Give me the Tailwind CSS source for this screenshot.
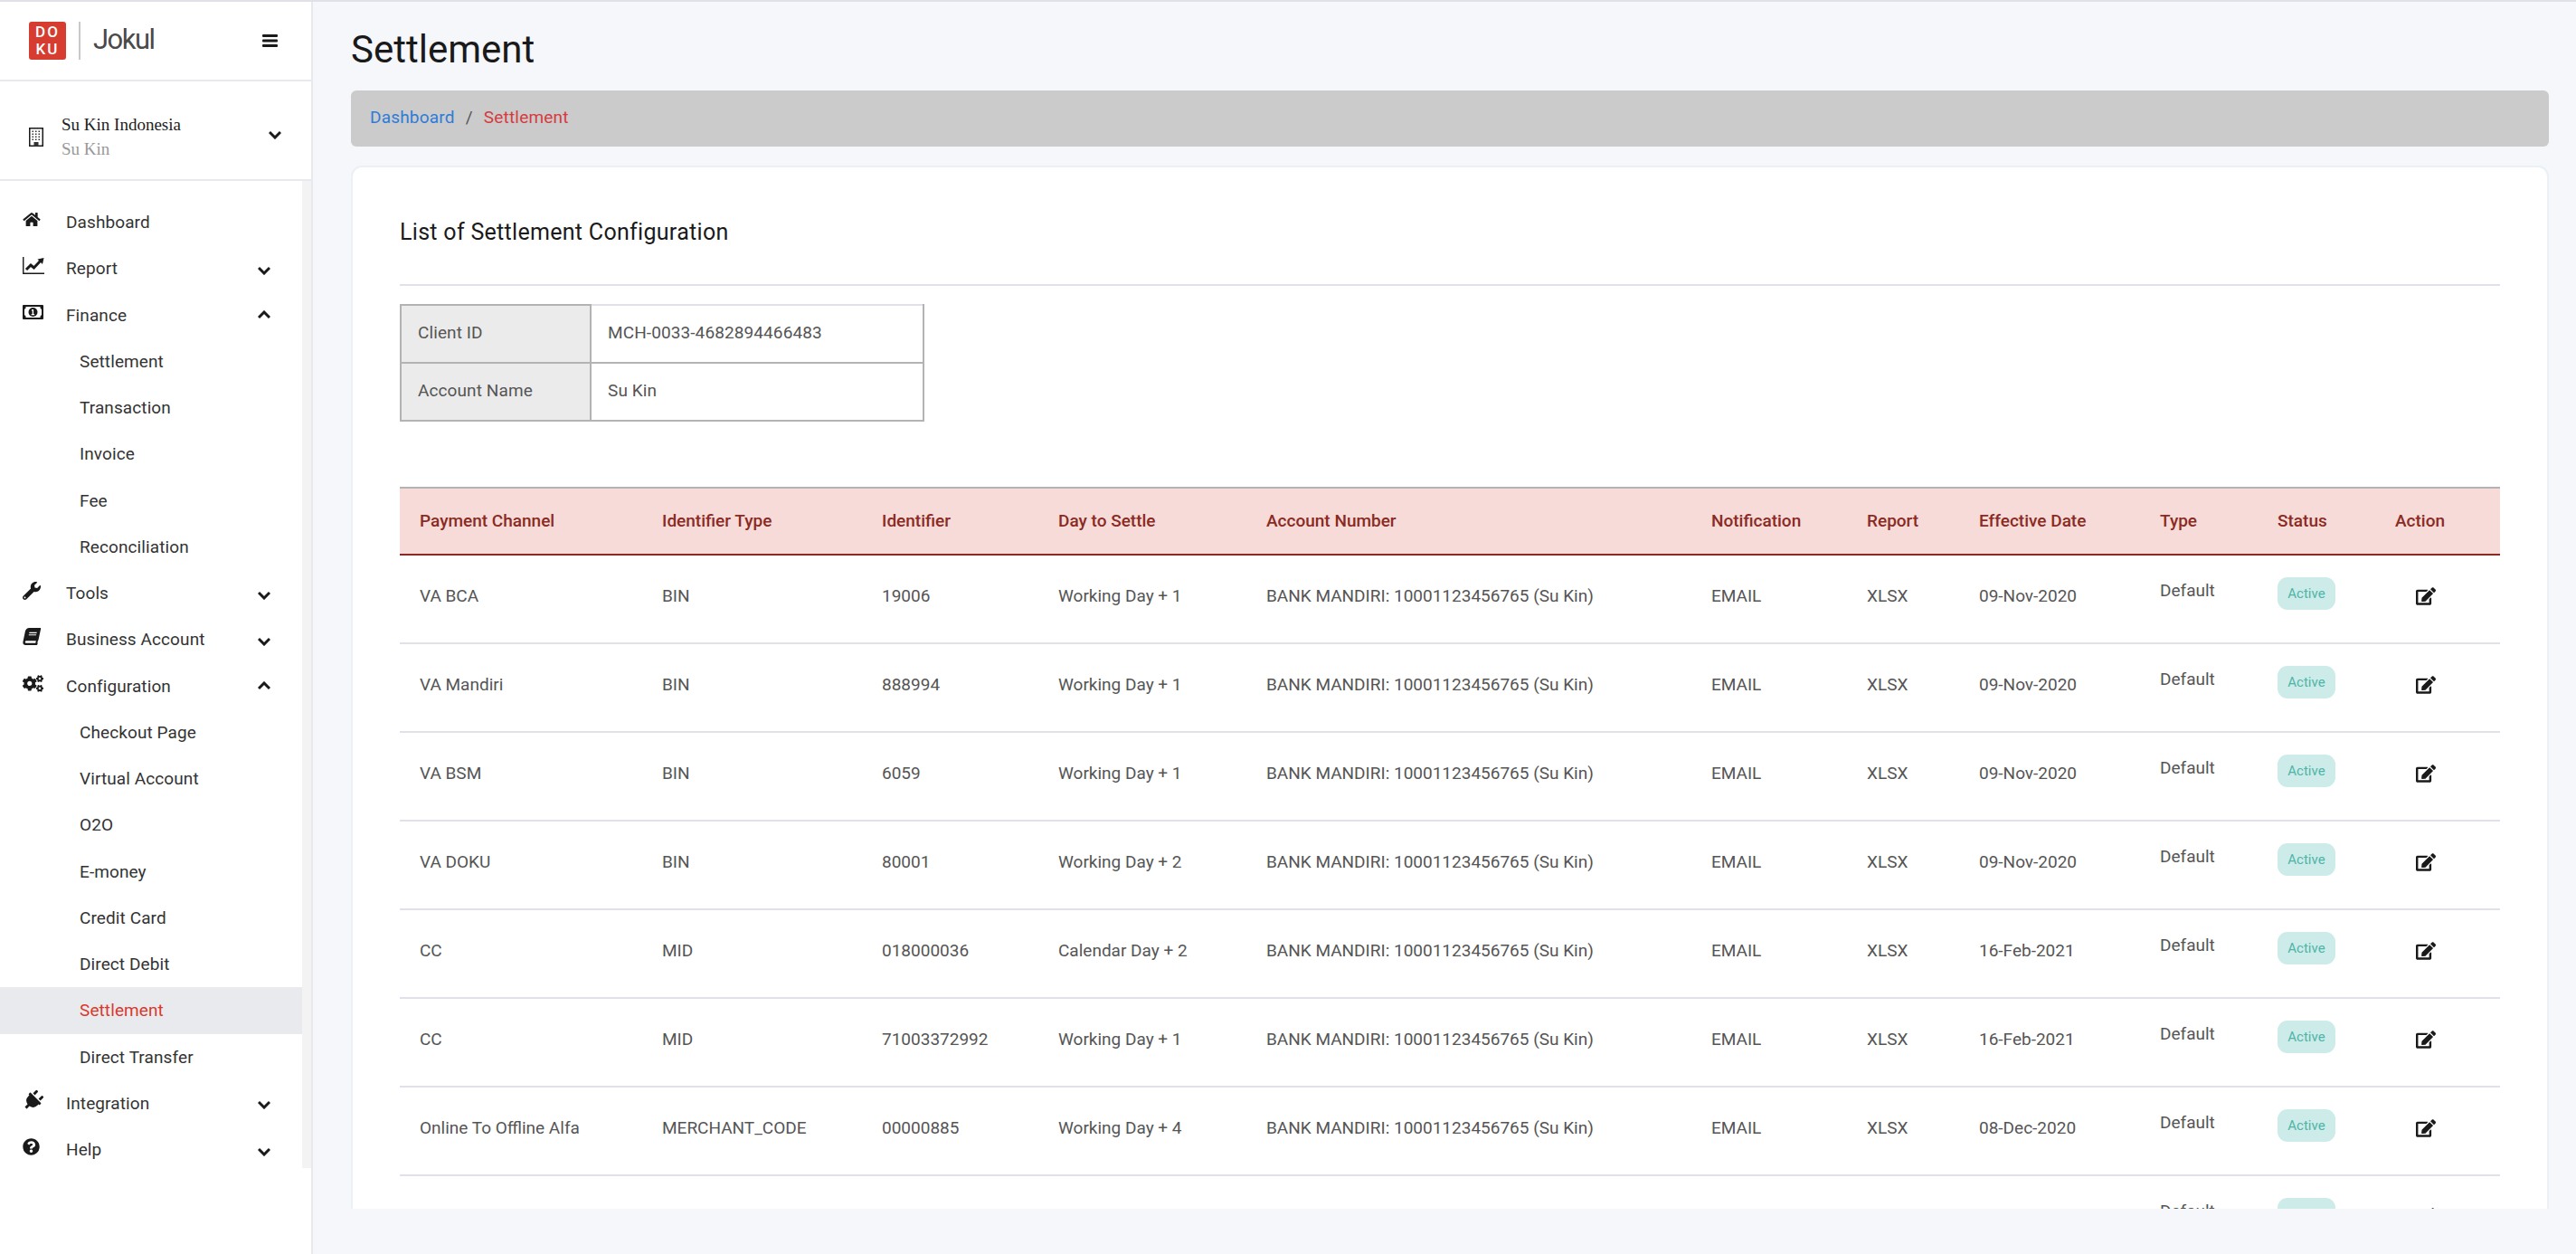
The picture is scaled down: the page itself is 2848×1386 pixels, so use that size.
<!DOCTYPE html>
<html lang="en">

<head>
  <meta charset="UTF-8" />
  <title>Settlement</title>
  <script src="https://cdn.jsdelivr.net/npm/@tailwindcss/browser@4"></script>
</head>

<body class="bg-[#f6f7fb] font-['Roboto',sans-serif] text-[#333333]">
  <div class="h-[1386px] overflow-hidden flex border-t-2 border-[#dfe0e8]">

    <!-- Sidebar -->
    <aside class="w-[346px] h-full flex-none bg-white border-r-2 border-[#e8e9ef] flex flex-col">
      <div class="h-[86px] flex-none flex items-center pl-[32px] pr-[37px]">
        <div class="w-[41px] h-[42px] rounded-[3px] bg-[#d63d30] text-white font-medium text-[17px] leading-[19px] tracking-[2px] flex flex-col items-center justify-center">
          <span>DO</span>
          <span>KU</span>
        </div>
        <div class="w-[2px] h-[42px] bg-[#c9c9c9] ml-[14px]"></div>
        <span class="ml-[14px] -mt-[3px] text-[31px] leading-none text-[#4a4a4a] tracking-[-1.5px]">Jokul</span>
        <svg class="ml-auto w-[17px] h-[14px]" viewBox="0 0 17 14" fill="#1a1a1a">
          <rect width="17" height="3" rx="1" />
          <rect y="5.5" width="17" height="3" rx="1" />
          <rect y="11" width="17" height="3" rx="1" />
        </svg>
      </div>

      <div class="h-[112px] flex-none border-y-2 border-[#e8e9ef] flex items-center pt-[14px] pl-[32px] pr-[33px]">
        <svg class="w-[16px] h-[21px] flex-none" viewBox="0 0 16 21">
          <rect x="0.75" y="0.75" width="14.5" height="19.5" fill="#fff" stroke="#1a1a1a" stroke-width="1.5" />
          <path d="M3.5 3.5h1.5v1.5h-1.5zM7 3.5h1.5v1.5h-1.5zM10.5 3.5h1.5v1.5h-1.5zM3.5 6.5h1.5v1.5h-1.5zM7 6.5h1.5v1.5h-1.5zM10.5 6.5h1.5v1.5h-1.5zM3.5 9.5h1.5v1.5h-1.5zM7 9.5h1.5v1.5h-1.5zM10.5 9.5h1.5v1.5h-1.5zM3.5 12.5h1.5v1.5h-1.5zM7 12.5h1.5v1.5h-1.5zM10.5 12.5h1.5v1.5h-1.5zM5.5 16h5v4.5h-5z" fill="#333" />
        </svg>
        <div class="ml-[20px] font-['Liberation_Serif',serif] text-[19px]">
          <div class="leading-[27px] text-[#222222]">Su Kin Indonesia</div>
          <div class="leading-[27px] text-[#999999]">Su Kin</div>
        </div>
        <svg class="ml-auto w-[14px] h-[10px] -mt-[4px]" viewBox="0 0 14 10" fill="none" stroke="#1a1a1a" stroke-width="3">
          <path d="M1 2l6 6 6-6" />
        </svg>
      </div>

      <nav class="h-[1091px] flex-none overflow-hidden border-r-[10px] border-[#f3f3f4] pt-[20px] text-[19px] tracking-[0.1px] leading-[51.25px]">
        <!-- Dashboard -->
        <a class="h-[51.25px] flex items-center pl-[25px] pr-[35px]">
          <svg class="w-[20px] h-[17px] -mt-[7px] flex-none" viewBox="0 0 576 512" fill="#1a1a1a"><path d="M280.37 148.26L96 300.11V464a16 16 0 0 0 16 16l112.06-.29a16 16 0 0 0 15.92-16V368a16 16 0 0 1 16-16h64a16 16 0 0 1 16 16v95.64a16 16 0 0 0 16 16.05L464 480a16 16 0 0 0 16-16V300L295.67 148.26a12.19 12.19 0 0 0-15.3 0zM571.6 251.47L488 182.56V44.05a12 12 0 0 0-12-12h-56a12 12 0 0 0-12 12v72.61L318.47 43a48 48 0 0 0-61 0L4.34 251.47a12 12 0 0 0-1.6 16.9l25.5 31A12 12 0 0 0 45.15 301l235.22-193.74a12.19 12.19 0 0 1 15.3 0L530.9 301a12 12 0 0 0 16.9-1.6l25.5-31a12 12 0 0 0-1.7-16.93z" /></svg>
          <span class="ml-[28px]">Dashboard</span>
        </a>
        <!-- Report -->
        <a class="h-[51.25px] flex items-center pl-[25px] pr-[35px]">
          <svg class="w-[24px] h-[19px] -mt-[6px] flex-none" viewBox="0 0 24 19" fill="none" stroke="#1a1a1a">
            <path d="M0.75 0v18.25H24" stroke-width="1.4" />
            <path d="M4 14l5-5 3.5 3 7-7.5" stroke-width="3" />
            <path d="M16.5 2.5L23.5 1l-1.5 7z" fill="#1a1a1a" stroke="none" />
          </svg>
          <span class="ml-[24px]">Report</span>
          <svg class="ml-auto w-[14px] h-[10px] mt-[4px]" viewBox="0 0 14 10" fill="none" stroke="#1a1a1a" stroke-width="3"><path d="M1 2l6 6 6-6" /></svg>
        </a>
        <!-- Finance -->
        <a class="h-[51.25px] flex items-center pl-[25px] pr-[35px]">
          <svg class="w-[23px] h-[16px] -mt-[6px] flex-none" viewBox="0 0 23 16">
            <rect width="23" height="16" rx="1" fill="#1a1a1a" />
            <path d="M3.5 2h16v1.5l1.5 1.5v6l-1.5 1.5v1.5h-16v-1.5L2 11V5l1.5-1.5z" fill="#fff" />
            <circle cx="11.5" cy="8" r="5" fill="#1a1a1a" />
            <path d="M10.2 5h1.9v5h1v1.2h-3.4V10h1V6.6h-.9z" fill="#fff" />
          </svg>
          <span class="ml-[25px]">Finance</span>
          <svg class="ml-auto w-[14px] h-[10px]" viewBox="0 0 14 10" fill="none" stroke="#1a1a1a" stroke-width="3"><path d="M1 8l6-6 6 6" /></svg>
        </a>
        <a class="h-[51.25px] flex items-center pl-[88px]">Settlement</a>
        <a class="h-[51.25px] flex items-center pl-[88px]">Transaction</a>
        <a class="h-[51.25px] flex items-center pl-[88px]">Invoice</a>
        <a class="h-[51.25px] flex items-center pl-[88px]">Fee</a>
        <a class="h-[51.25px] flex items-center pl-[88px]">Reconciliation</a>
        <!-- Tools -->
        <a class="h-[51.25px] flex items-center pl-[25px] pr-[35px]">
          <svg class="w-[20px] h-[20px] -mt-[6px] flex-none" viewBox="0 0 512 512" fill="#1a1a1a"><path d="M507.73 109.1c-2.24-9.03-13.54-12.09-20.12-5.51l-74.36 74.36-67.88-11.31-11.31-67.88 74.36-74.36c6.62-6.62 3.43-17.9-5.66-20.16-47.38-11.74-99.55.91-136.58 37.93-39.64 39.64-50.55 97.1-34.05 147.2L18.74 402.76c-24.99 24.99-24.99 65.51 0 90.5 24.99 24.99 65.51 24.99 90.5 0l213.21-213.21c50.12 16.71 107.47 5.68 147.37-34.22 37.07-37.07 49.7-89.32 37.91-136.73zM64 472c-13.25 0-24-10.75-24-24 0-13.26 10.75-24 24-24s24 10.74 24 24c0 13.25-10.75 24-24 24z" /></svg>
          <span class="ml-[28px]">Tools</span>
          <svg class="ml-auto w-[14px] h-[10px] mt-[4px]" viewBox="0 0 14 10" fill="none" stroke="#1a1a1a" stroke-width="3"><path d="M1 2l6 6 6-6" /></svg>
        </a>
        <!-- Business Account -->
        <a class="h-[51.25px] flex items-center pl-[25px] pr-[35px]">
          <svg class="w-[20px] h-[19px] -mt-[6px] flex-none -skew-x-12" viewBox="0 0 448 512" fill="#1a1a1a"><path d="M448 360V24c0-13.3-10.7-24-24-24H96C43 0 0 43 0 96v320c0 53 43 96 96 96h328c13.3 0 24-10.7 24-24v-16c0-7.5-3.5-14.3-8.9-18.7-4.2-15.4-4.2-59.3 0-74.7 5.4-4.3 8.9-11.1 8.9-18.6zM128 134c0-3.3 2.7-6 6-6h212c3.3 0 6 2.7 6 6v20c0 3.3-2.7 6-6 6H134c-3.3 0-6-2.7-6-6v-20zm0 64c0-3.3 2.7-6 6-6h212c3.3 0 6 2.7 6 6v20c0 3.3-2.7 6-6 6H134c-3.3 0-6-2.7-6-6v-20zm253.4 250H96c-17.7 0-32-14.3-32-32 0-17.6 14.4-32 32-32h285.4c-1.9 17.1-1.9 46.9 0 64z" /></svg>
          <span class="ml-[28px]">Business Account</span>
          <svg class="ml-auto w-[14px] h-[10px] mt-[4px]" viewBox="0 0 14 10" fill="none" stroke="#1a1a1a" stroke-width="3"><path d="M1 2l6 6 6-6" /></svg>
        </a>
        <!-- Configuration -->
        <a class="h-[51.25px] flex items-center pl-[25px] pr-[35px]">
          <svg class="w-[23px] h-[19px] -mt-[6px] flex-none" viewBox="0 0 640 512" fill="#1a1a1a"><path d="M512.1 191l-8.2 14.3c-3 5.3-9.4 7.5-15.1 5.4-11.8-4.4-22.6-10.7-32.1-18.6-4.6-3.8-5.8-10.5-2.8-15.7l8.2-14.3c-6.9-8-12.3-17.3-15.9-27.4h-16.5c-6 0-11.2-4.3-12.2-10.3-2-12-2.1-24.6 0-37.1 1-6 6.2-10.4 12.2-10.4h16.5c3.6-10.1 9-19.4 15.9-27.4l-8.2-14.3c-3-5.2-1.9-11.9 2.8-15.7 9.5-7.9 20.4-14.2 32.1-18.6 5.7-2.1 12.1.1 15.1 5.4l8.2 14.3c10.5-1.9 21.2-1.9 31.7 0L552 6.3c3-5.3 9.4-7.5 15.1-5.4 11.8 4.4 22.6 10.7 32.1 18.6 4.6 3.8 5.8 10.5 2.8 15.7l-8.2 14.3c6.9 8 12.3 17.3 15.9 27.4h16.5c6 0 11.2 4.3 12.2 10.3 2 12 2.1 24.6 0 37.1-1 6-6.2 10.4-12.2 10.4h-16.5c-3.6 10.1-9 19.4-15.9 27.4l8.2 14.3c3 5.2 1.9 11.9-2.8 15.7-9.5 7.9-20.4 14.2-32.1 18.6-5.7 2.1-12.1-.1-15.1-5.4l-8.2-14.3c-10.4 1.9-21.2 1.9-31.7 0zm-10.5-58.8c38.5 29.6 82.4-14.3 52.8-52.8-38.5-29.7-82.4 14.3-52.8 52.8zM386.3 286.1l33.7 16.8c10.1 5.8 14.5 18.1 10.5 29.1-8.9 24.2-26.4 46.4-42.6 65.8-7.4 8.9-20.2 11.1-30.3 5.3l-29.1-16.8c-16 13.7-34.6 24.6-54.9 31.7v33.6c0 11.6-8.3 21.6-19.7 23.6-24.6 4.2-50.4 4.4-75.9 0-11.5-2-20-11.9-20-23.6V418c-20.3-7.2-38.9-18-54.9-31.7L74 403c-10 5.8-22.9 3.6-30.3-5.3-16.2-19.4-33.3-41.6-42.2-65.7-4-10.9.4-23.2 10.5-29.1l33.3-16.8c-3.9-20.9-3.9-42.4 0-63.4L12 205.8c-10.1-5.8-14.6-18.1-10.5-29 8.9-24.2 26-46.4 42.2-65.8 7.4-8.9 20.2-11.1 30.3-5.3l29.1 16.8c16-13.7 34.6-24.6 54.9-31.7V57.1c0-11.5 8.2-21.5 19.6-23.5 24.6-4.2 50.5-4.4 76-.1 11.5 2 20 11.9 20 23.6v33.6c20.3 7.2 38.9 18 54.9 31.7l29.1-16.8c10-5.8 22.9-3.6 30.3 5.3 16.2 19.4 33.2 41.6 42.1 65.8 4 10.9.1 23.2-10 29.1l-33.7 16.8c3.9 21 3.9 42.5 0 63.5zm-117.6 21.1c59.2-77-28.7-164.9-105.7-105.7-59.2 77 28.7 164.9 105.7 105.7zm243.4 182.7l-8.2 14.3c-3 5.3-9.4 7.5-15.1 5.4-11.8-4.4-22.6-10.7-32.1-18.6-4.6-3.8-5.8-10.5-2.8-15.7l8.2-14.3c-6.9-8-12.3-17.3-15.9-27.4h-16.5c-6 0-11.2-4.3-12.2-10.3-2-12-2.1-24.6 0-37.1 1-6 6.2-10.4 12.2-10.4h16.5c3.6-10.1 9-19.4 15.9-27.4l-8.2-14.3c-3-5.2-1.9-11.9 2.8-15.7 9.5-7.9 20.4-14.2 32.1-18.6 5.7-2.1 12.1.1 15.1 5.4l8.2 14.3c10.5-1.9 21.2-1.9 31.7 0l8.2-14.3c3-5.3 9.4-7.5 15.1-5.4 11.8 4.4 22.6 10.7 32.1 18.6 4.6 3.8 5.8 10.5 2.8 15.7l-8.2 14.3c6.9 8 12.3 17.3 15.9 27.4h16.5c6 0 11.2 4.3 12.2 10.3 2 12 2.1 24.6 0 37.1-1 6-6.2 10.4-12.2 10.4h-16.5c-3.6 10.1-9 19.4-15.9 27.4l8.2 14.3c3 5.2 1.9 11.9-2.8 15.7-9.5 7.9-20.4 14.2-32.1 18.6-5.7 2.1-12.1-.1-15.1-5.4l-8.2-14.3c-10.4 1.9-21.2 1.9-31.7 0zM501.6 431c38.5 29.6 82.4-14.3 52.8-52.8-38.5-29.6-82.4 14.3-52.8 52.8z" /></svg>
          <span class="ml-[25px]">Configuration</span>
          <svg class="ml-auto w-[14px] h-[10px]" viewBox="0 0 14 10" fill="none" stroke="#1a1a1a" stroke-width="3"><path d="M1 8l6-6 6 6" /></svg>
        </a>
        <a class="h-[51.25px] flex items-center pl-[88px]">Checkout Page</a>
        <a class="h-[51.25px] flex items-center pl-[88px]">Virtual Account</a>
        <a class="h-[51.25px] flex items-center pl-[88px]">O2O</a>
        <a class="h-[51.25px] flex items-center pl-[88px]">E-money</a>
        <a class="h-[51.25px] flex items-center pl-[88px]">Credit Card</a>
        <a class="h-[51.25px] flex items-center pl-[88px]">Direct Debit</a>
        <a class="h-[51.25px] flex items-center pl-[88px] bg-[#e9eaee] text-[#d9392d]">Settlement</a>
        <a class="h-[51.25px] flex items-center pl-[88px]">Direct Transfer</a>
        <!-- Integration -->
        <a class="h-[51.25px] flex items-center pl-[25px] pr-[35px]">
          <svg class="w-[23px] h-[23px] -mt-[6px] flex-none rotate-45" viewBox="0 0 384 512" fill="#1a1a1a"><path d="M320,32a32,32,0,0,0-64,0v96h64Zm48,128H16A16,16,0,0,0,0,176v32a16,16,0,0,0,16,16H32v32A160.07,160.07,0,0,0,160,412.8V512h64V412.8A160.07,160.07,0,0,0,352,256V224h16a16,16,0,0,0,16-16V176A16,16,0,0,0,368,160ZM128,32a32,32,0,0,0-64,0v96h64Z" /></svg>
          <span class="ml-[25px]">Integration</span>
          <svg class="ml-auto w-[14px] h-[10px] mt-[4px]" viewBox="0 0 14 10" fill="none" stroke="#1a1a1a" stroke-width="3"><path d="M1 2l6 6 6-6" /></svg>
        </a>
        <!-- Help -->
        <a class="h-[51.25px] flex items-center pl-[25px] pr-[35px]">
          <svg class="w-[19px] h-[19px] -mt-[6px] flex-none" viewBox="0 0 512 512" fill="#1a1a1a"><path d="M504 256c0 136.997-111.043 248-248 248S8 392.997 8 256C8 119.083 119.043 8 256 8s248 111.083 248 248zM262.655 90c-54.497 0-89.255 22.957-116.549 63.758-3.536 5.286-2.353 12.415 2.715 16.258l34.699 26.31c5.205 3.947 12.621 3.008 16.665-2.122 17.864-22.658 30.113-35.797 57.303-35.797 20.429 0 45.698 13.148 45.698 32.958 0 14.976-12.363 22.667-32.534 33.976C247.128 238.528 216 254.941 216 296v4c0 6.627 5.373 12 12 12h56c6.627 0 12-5.373 12-12v-1.333c0-28.462 83.186-29.647 83.186-106.667 0-58.002-60.165-102-116.531-102zM256 338c-25.365 0-46 20.635-46 46 0 25.364 20.635 46 46 46s46-20.636 46-46c0-25.365-20.635-46-46-46z" /></svg>
          <span class="ml-[29px]">Help</span>
          <svg class="ml-auto w-[14px] h-[10px] mt-[4px]" viewBox="0 0 14 10" fill="none" stroke="#1a1a1a" stroke-width="3"><path d="M1 2l6 6 6-6" /></svg>
        </a>
      </nav>
    </aside>

    <!-- Main -->
    <main class="flex-1 h-[1334px] pl-[42px] pr-[30px] overflow-hidden">
      <h1 class="h-[98px] pt-[27px] text-[42px] leading-[52px] text-[#1a1a1a]">Settlement</h1>

      <div class="h-[62px] rounded-[6px] bg-[#cbcbcb] flex items-center pl-[21px] pb-[2px] text-[19px] tracking-[0.2px]">
        <a class="text-[#2f7bd8]">Dashboard</a>
        <span class="mx-[12px] text-[#555555]">/</span>
        <span class="text-[#d63b40]">Settlement</span>
      </div>

      <section class="mt-[21px] bg-white rounded-[12px] border-2 border-[#eaf0f6] px-[52px] h-[1200px]">
        <h2 class="h-[131px] pt-[56px] text-[25px] leading-[32px] text-[#1a1a1a] border-b-2 border-[#e1e2e9] tracking-[0.3px]">List of Settlement Configuration</h2>

        <table class="mt-[20px] w-[580px] table-fixed border-collapse text-[19px] tracking-[0.1px] text-[#555555]">
          <tbody>
            <tr class="h-[64px]">
              <th class="w-[210px] bg-[#ebebeb] border-2 border-[#b3b3b3] pl-[18px] pb-[2px] text-left font-normal">Client ID</th>
              <td class="border-2 border-t-[#dfe0e8] border-[#b3b3b3] pl-[18px] pb-[2px]">MCH-0033-4682894466483</td>
            </tr>
            <tr class="h-[64px]">
              <th class="bg-[#ebebeb] border-2 border-[#b3b3b3] pl-[18px] pb-[2px] text-left font-normal">Account Name</th>
              <td class="border-2 border-[#b3b3b3] pl-[18px] pb-[2px]">Su Kin</td>
            </tr>
          </tbody>
        </table>

        <table class="mt-[72px] w-[2322px] table-fixed text-[19px] leading-[24px] text-[#555555]">
          <colgroup>
            <col class="w-[268px]"><col class="w-[243px]"><col class="w-[195px]"><col class="w-[230px]"><col class="w-[492px]"><col class="w-[172px]"><col class="w-[124px]"><col class="w-[200px]"><col class="w-[131px]"><col class="w-[130px]"><col class="w-[137px]">
          </colgroup>
          <thead class="bg-[#f6dbd9] text-[#8a2a22] text-left">
            <tr class="h-[74px] border-t-2 border-b-2 border-t-[#b3b3b3] border-b-[#8a2a22]">
              <th class="pl-[22px] font-medium">Payment Channel</th>
              <th class="pl-[22px] font-medium">Identifier Type</th>
              <th class="pl-[22px] font-medium">Identifier</th>
              <th class="pl-[22px] font-medium">Day to Settle</th>
              <th class="pl-[22px] font-medium">Account Number</th>
              <th class="pl-[22px] font-medium">Notification</th>
              <th class="pl-[22px] font-medium">Report</th>
              <th class="pl-[22px] font-medium">Effective Date</th>
              <th class="pl-[22px] font-medium">Type</th>
              <th class="pl-[21px] font-medium">Status</th>
              <th class="pl-[21px] font-medium">Action</th>
            </tr>
          </thead>
          <tbody id="SettlementRows" class="align-top"></tbody>
        </table>
      </section>
    </main>
  </div>

  <script>
    const account = "BANK MANDIRI: 10001123456765 (Su Kin)";
    const rows = [
      ["VA BCA", "BIN", "19006", "Working Day + 1", "09-Nov-2020"],
      ["VA Mandiri", "BIN", "888994", "Working Day + 1", "09-Nov-2020"],
      ["VA BSM", "BIN", "6059", "Working Day + 1", "09-Nov-2020"],
      ["VA DOKU", "BIN", "80001", "Working Day + 2", "09-Nov-2020"],
      ["CC", "MID", "018000036", "Calendar Day + 2", "16-Feb-2021"],
      ["CC", "MID", "71003372992", "Working Day + 1", "16-Feb-2021"],
      ["Online To Offline Alfa", "MERCHANT_CODE", "00000885", "Working Day + 4", "08-Dec-2020"],
      null
    ];

    const tail = `
      <td class="pl-[22px] pt-[27px]">Default</td>
      <td class="pl-[21px] pt-[24px]"><span class="block w-[64px] h-[36px] rounded-[11px] bg-[#cdebe8] text-[#4eb5a9] text-[15px] leading-[36px] text-center">Active</span></td>
      <td class="pl-[44px] pt-[35px]"><svg class="w-[22px] h-[20px]" viewBox="0 0 576 512" fill="#1a1a1a"><path d="M402.6 83.2l90.2 90.2c3.8 3.8 3.8 10 0 13.8L274.4 405.6l-92.8 10.3c-12.4 1.4-22.9-9.1-21.5-21.5l10.3-92.8L388.8 83.2c3.8-3.8 10-3.8 13.8 0zm162-22.9l-48.8-48.8c-15.2-15.2-39.9-15.2-55.2 0l-35.4 35.4c-3.8 3.8-3.8 10 0 13.8l90.2 90.2c3.8 3.8 10 3.8 13.8 0l35.4-35.4c15.2-15.3 15.2-40 0-55.2zM384 346.2V448H64V128h229.8c3.2 0 6.2-1.3 8.5-3.5l40-40c7.6-7.6 2.2-20.5-8.5-20.5H48C21.5 64 0 85.5 0 112v352c0 26.5 21.5 48 48 48h352c26.5 0 48-21.5 48-48V306.2c0-10.7-12.9-16-20.5-8.5l-40 40c-2.2 2.3-3.5 5.3-3.5 8.5z" /></svg></td>`;

    document.getElementById("SettlementRows").innerHTML = rows.map((row) => {
      if (!row) return `<tr class="h-[98px]"><td colspan="8"></td>${tail}</tr>`;
      const [channel, idType, id, settle, date] = row;
      const cells = [channel, idType, id, settle, account, "EMAIL", "XLSX", date];
      return `<tr class="h-[98px] border-b-2 border-[#e1e2e9]">
        ${cells.map((text) => `<td class="pl-[22px] pt-[33px]">${text}</td>`).join("")}
        ${tail}
      </tr>`;
    }).join("");
  </script>
</body>

</html>
